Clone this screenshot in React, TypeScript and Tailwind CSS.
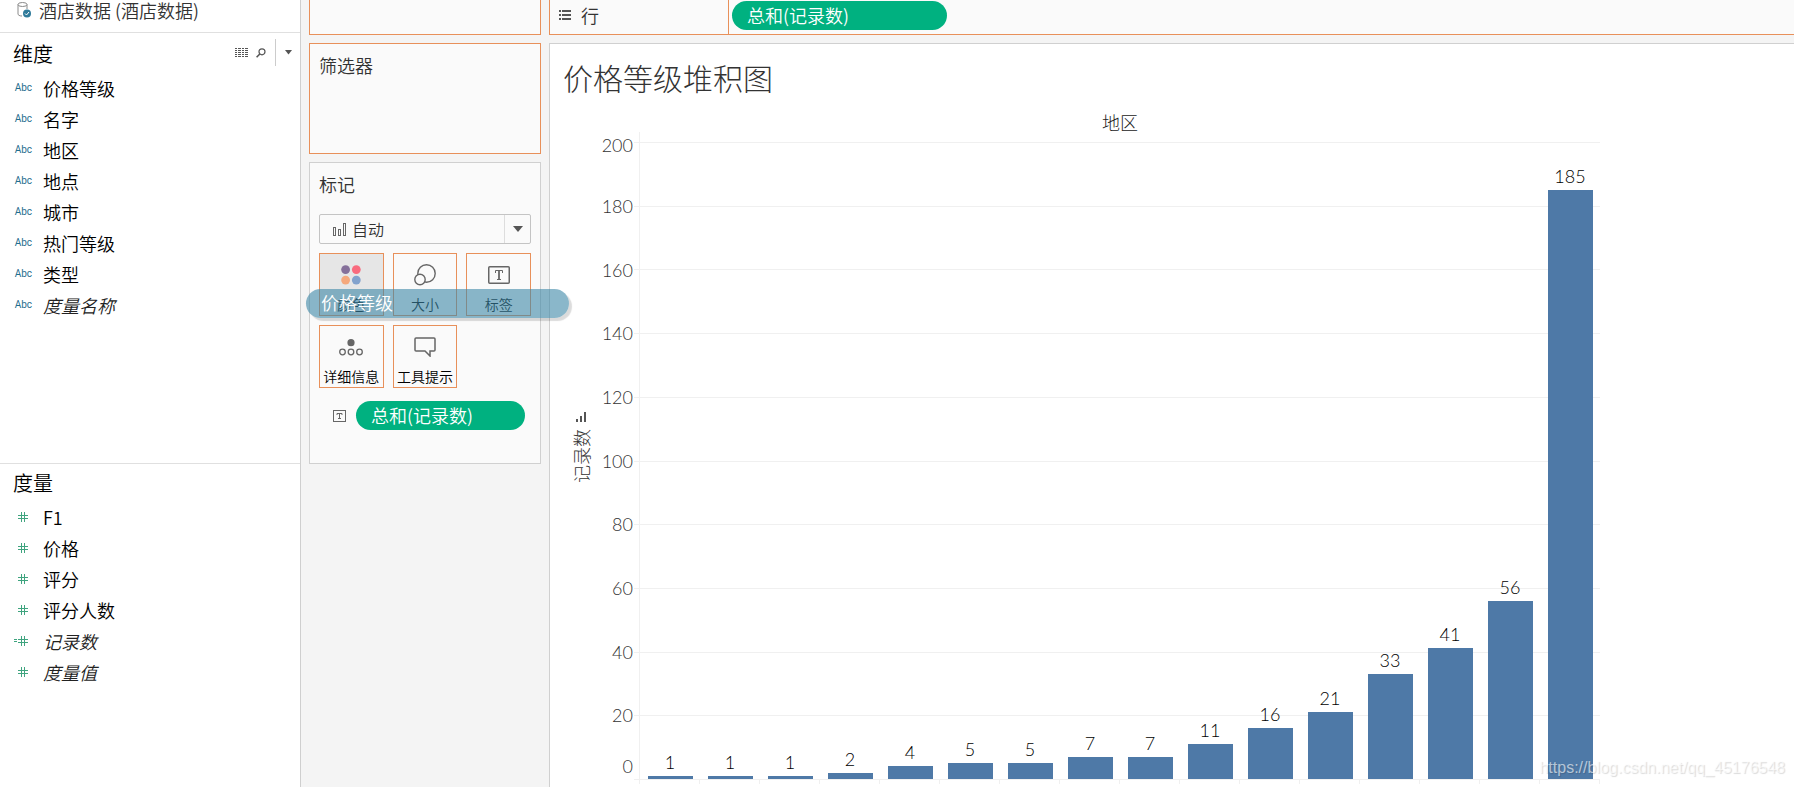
import React from "react";

const dimensions = ["价格等级", "名字", "地区", "地点", "城市", "热门等级", "类型"];
const measures = ["F1", "价格", "评分", "评分人数"];
const values = [1, 1, 1, 2, 4, 5, 5, 7, 7, 11, 16, 21, 33, 41, 56, 185];
const axisTicks = [180, 160, 140, 120, 100, 80, 60, 40, 20];
const AXIS_MAX = 200;

function DatabaseIcon() {
  return (
    <svg width="15" height="16" viewBox="0 0 15 16" fill="none" aria-hidden="true">
      <path d="M1 2.5v9.5c0 1 1.5 2 4 2M10 2.5V7" stroke="#8a8a8a" />
      <ellipse cx="5.5" cy="2.5" rx="4.5" ry="2" stroke="#8a8a8a" />
      <circle cx="10" cy="11.5" r="4" fill="#2f7a9a" />
      <path d="M8 11.5l1.5 1.5 2.5-3" stroke="#fff" />
    </svg>
  );
}

function GridIcon() {
  return (
    <svg width="13" height="10" viewBox="0 0 13 10" fill="#555" shapeRendering="crispEdges" aria-hidden="true">
      {[0, 2, 4, 6, 8].map((y) => (
        <g key={y}>
          <rect x="0" y={y} width="2" height="1" />
          <rect x="3" y={y} width="3" height="1" />
          <rect x="7" y={y} width="2" height="1" />
          <rect x="10" y={y} width="3" height="1" />
        </g>
      ))}
    </svg>
  );
}

function SearchIcon() {
  return (
    <svg width="10" height="10" viewBox="0 0 10 10" fill="none" stroke="#555" strokeWidth="1.2" aria-hidden="true">
      <circle cx="6" cy="3.8" r="3" />
      <path d="M3.8 6L.6 9.2" strokeWidth="1.6" />
    </svg>
  );
}

function HashIcon({ calculated = false }: { calculated?: boolean }) {
  return (
    <svg width="15" height="10" viewBox="0 0 15 10" fill="#3fa47f" shapeRendering="crispEdges" aria-hidden="true">
      <rect x="8" y="0" width="1" height="10" />
      <rect x="11" y="0" width="1" height="10" />
      <rect x="5" y="3" width="10" height="1" />
      <rect x="5" y="6" width="10" height="1" />
      {calculated && (
        <>
          <rect x="1" y="3" width="3" height="1" />
          <rect x="1" y="5" width="3" height="1" />
        </>
      )}
    </svg>
  );
}

function TextIcon({ small = false }: { small?: boolean }) {
  return small ? (
    <svg width="13" height="12" viewBox="0 0 13 12" fill="none" stroke="#666" aria-hidden="true">
      <rect x=".5" y=".5" width="12" height="11" />
      <path d="M4 5V3.5h5V5M6.5 3.5v5M5 8.5h3" />
    </svg>
  ) : (
    <svg width="22" height="18" viewBox="0 0 22 18" fill="none" stroke="#666" aria-hidden="true">
      <rect x=".75" y=".75" width="20.5" height="16.5" rx="1" strokeWidth="1.5" />
      <path d="M7.5 7V4.5h7V7M9 13.5h4" />
      <path d="M11 4.5v9" strokeWidth="1.8" />
    </svg>
  );
}

function ColorIcon() {
  return (
    <svg width="20" height="20" viewBox="0 0 20 20" aria-hidden="true">
      <circle cx="4.6" cy="4.6" r="4.4" fill="#85709a" />
      <circle cx="15.3" cy="4.6" r="4.4" fill="#f96b7e" />
      <circle cx="4.6" cy="15.1" r="4.4" fill="#f5a87c" />
      <circle cx="15.3" cy="15.1" r="4.4" fill="#82a2cd" />
    </svg>
  );
}

function SizeIcon() {
  return (
    <svg width="22" height="22" viewBox="0 0 22 22" fill="none" stroke="#666" strokeWidth="1.4" aria-hidden="true">
      <circle cx="12.5" cy="9.5" r="8.7" />
      <circle cx="6" cy="15.5" r="5.2" fill="#fafafa" />
    </svg>
  );
}

function DetailIcon() {
  return (
    <svg width="24" height="17" viewBox="0 0 24 17" fill="none" stroke="#666" strokeWidth="1.3" aria-hidden="true">
      <circle cx="12" cy="3.7" r="3.6" fill="#666" stroke="none" />
      <circle cx="3.5" cy="13" r="2.8" />
      <circle cx="12" cy="13" r="2.8" />
      <circle cx="20.5" cy="13" r="2.8" />
    </svg>
  );
}

function TooltipIcon() {
  return (
    <svg width="22" height="20" viewBox="0 0 22 20" fill="none" stroke="#666" strokeWidth="1.5" aria-hidden="true">
      <path d="M2 1h18q1 0 1 1v11q0 1-1 1h-4v5l-5-5H2q-1 0-1-1V2q0-1 1-1z" />
    </svg>
  );
}

function Field({ name, icon, italic = false }: { name: string; icon: React.ReactNode; italic?: boolean }) {
  return (
    <li className="flex h-[31px] items-center">
      <span className="flex w-[43px] shrink-0 justify-end pr-[15px] pt-px">{icon}</span>
      <span className={italic ? "italic text-[#222]" : ""}>{name}</span>
    </li>
  );
}

function AbcIcon() {
  return <span className="-mr-1 font-['Roboto',sans-serif] text-[10px] font-normal leading-3 text-[#1f6d8e]">Abc</span>;
}

function MarkButton({ label, icon, active = false }: { label: string; icon: React.ReactNode; active?: boolean }) {
  return (
    <button
      type="button"
      className={`flex h-[63px] flex-col items-center justify-between border border-[#e8905a] pb-[1px] pt-[9px] text-sm leading-5 whitespace-nowrap ${active ? "bg-[#e6e6e6]" : "bg-[#fafafa]"}`}
    >
      <span className="flex h-6 items-center">{icon}</span>
      <span>{label}</span>
    </button>
  );
}

function Sidebar() {
  return (
    <aside className="flex w-[301px] shrink-0 flex-col border-r border-[#cfcfcf] bg-white text-lg leading-6">
      <div className="flex h-[33px] items-center gap-[7px] border-b border-[#e0e0e0] pb-3 pl-[17px] text-[#333]">
        <DatabaseIcon />
        <span>酒店数据 (酒店数据)</span>
      </div>
      <section className="h-[430px]">
        <div className="flex h-[39px] items-center pl-[13px]">
          <h2 className="flex-1 pt-0.5 text-xl">维度</h2>
          <div className="flex h-[27px] items-center">
            <button type="button" aria-label="查看数据"><GridIcon /></button>
            <button type="button" aria-label="查找字段" className="ml-2 mr-[9px]"><SearchIcon /></button>
            <button type="button" aria-label="菜单" className="h-full border-l border-[#ccc] pl-[9px] pr-2">
              <svg width="7" height="5" viewBox="0 0 7 5" fill="#555" aria-hidden="true"><path d="M0 0h7L3.500 4.500z" /></svg>
            </button>
          </div>
        </div>
        <ul>
          {dimensions.map((d) => <Field key={d} name={d} icon={<AbcIcon />} />)}
          <Field name="度量名称" icon={<AbcIcon />} italic />
        </ul>
      </section>
      <section className="border-t border-[#e0e0e0]">
        <h2 className="flex h-[37px] items-center pl-[13px] text-xl">度量</h2>
        <ul>
          {measures.map((m) => <Field key={m} name={m} icon={<HashIcon />} />)}
          <Field name="记录数" icon={<HashIcon calculated />} italic />
          <Field name="度量值" icon={<HashIcon />} italic />
        </ul>
      </section>
    </aside>
  );
}

function Cards() {
  return (
    <div className="flex w-[232px] shrink-0 flex-col gap-2 text-[#333]">
      <div className="h-[35px] border border-t-0 border-[#e8905a] bg-[#fafafa]" />
      <section className="h-[111px] border border-[#e8905a] bg-[#fafafa] px-[9px] py-[9px]">
        <h2 className="text-lg leading-6">筛选器</h2>
      </section>
      <section className="relative h-[302px] border border-[#d0d0d0] bg-[#fafafa] px-[9px] py-[9px]">
        <h2 className="text-lg leading-6">标记</h2>
        <div className="mt-[18px] grid items-center">
          <select aria-label="标记类型" className="col-start-1 row-start-1 h-[30px] w-full appearance-none rounded-xs border border-[#c4c4c4] bg-[#fafafa] pl-8 text-base">
            <option>自动</option>
          </select>
          <div className="pointer-events-none col-start-1 row-start-1 flex items-center justify-between pl-[14px]">
            <svg width="13" height="13" viewBox="0 0 13 13" fill="none" stroke="#666" aria-hidden="true">
              <rect x=".5" y="4.500" width="2" height="8" />
              <rect x="5.500" y="6.500" width="2" height="6" />
              <rect x="10.500" y=".5" width="2" height="12" />
            </svg>
            <span className="flex h-7 w-[27px] items-center justify-center border-l border-[#ddd]">
              <svg width="10" height="6" viewBox="0 0 10 6" fill="#555" aria-hidden="true"><path d="M0 0h10L5 6z" /></svg>
            </span>
          </div>
        </div>
        <div className="mt-[9px] grid grid-cols-3 gap-x-[9px] gap-y-[9px] text-black">
          <MarkButton label="颜色" icon={<ColorIcon />} active />
          <MarkButton label="大小" icon={<SizeIcon />} />
          <MarkButton label="标签" icon={<TextIcon />} />
          <MarkButton label="详细信息" icon={<DetailIcon />} />
          <MarkButton label="工具提示" icon={<TooltipIcon />} />
        </div>
        <div className="mt-[13px] flex items-center gap-[10px] pl-[14px] pr-[6px]">
          <TextIcon small />
          <button type="button" className="h-[29px] flex-1 rounded-full bg-[#00b180] pb-px pl-[15px] text-left text-lg leading-6 text-white">总和(记录数)</button>
        </div>
        <div className="absolute left-[-4px] top-[126px] z-10 h-[29px] w-[263px] rounded-full bg-[#3c87a6]/60 pl-[15px] text-lg leading-[26px] text-white shadow-[3px_3px_1px_rgba(0,0,0,0.14)]">
          价格等级
        </div>
      </section>
    </div>
  );
}

function Chart() {
  return (
    <div className="flex pl-[21px]">
      <div className="mt-[22px] flex h-[647px] w-[20px] shrink-0 flex-col items-center">
        <div className="flex flex-1 flex-col justify-end pb-[7px]">
          <svg width="10" height="10" viewBox="0 0 10 10" fill="#555" shapeRendering="crispEdges" aria-hidden="true">
            <rect x="0" y="7" width="2" height="3" />
            <rect x="4" y="4" width="2" height="6" />
            <rect x="8" y="0" width="2" height="10" />
          </svg>
        </div>
        <span className="rotate-180 text-lg font-light leading-5 text-[#333] [text-orientation:sideways] [writing-mode:vertical-rl]">记录数</span>
        <div className="flex-1" />
      </div>
      <div className="mt-[25px] flex h-[647px] w-[42px] shrink-0 flex-col text-right font-['Lato',sans-serif] text-lg font-light text-[#333]">
        <span className="mb-[14px] h-7 leading-[26px]">200</span>
        {axisTicks.map((t) => <span key={t} className="flex flex-1 items-center justify-end">{t}</span>)}
        <span className="h-8 pt-2 leading-[22px]">0</span>
      </div>
      <div className="ml-px max-w-[966px] flex-1">
        <div className="h-[25px] pl-[6px] text-center text-lg font-light leading-[30px] text-[#222]">地区</div>
        <div className="grid h-[648px]">
          <div className="col-start-1 row-start-1 flex flex-col border-b border-[#f0f0f0] pt-[10px]">
            {[200, ...axisTicks].map((t) => <div key={t} className="flex-1 border-t border-[#f0f0f0]" />)}
          </div>
          <div className="col-start-1 row-start-1 ml-[5px] flex items-end border-l border-[#f0f0f0] pb-px pt-[10px]">
            {values.map((v, i) => (
              <div key={i} className="flex h-full flex-1 flex-col items-center justify-end">
                <span className="font-['Lato',sans-serif] text-lg font-light leading-[28px] text-black">{v}</span>
                <div className="w-3/4 shrink-0 bg-[#4e79a7]" style={{ height: `${(v / AXIS_MAX) * 100}%` }} />
              </div>
            ))}
          </div>
        </div>
        <div className="ml-[5px] flex h-1 border-x border-[#f0f0f0]">
          {values.map((_, i) => <div key={i} className={i ? "flex-1 border-l border-[#f0f0f0]" : "flex-1"} />)}
        </div>
      </div>
    </div>
  );
}

export default function App() {
  return (
    <div className="relative flex min-h-screen bg-[#f4f4f4] font-['Noto_Sans_CJK_SC',sans-serif] font-[350] text-black">
      <Sidebar />
      <main className="flex min-w-0 flex-1 gap-2 pl-2">
        <Cards />
        <div className="flex min-w-0 flex-1 flex-col gap-2">
          <div className="flex h-[35px] border-b border-l border-[#e8905a] bg-[#fafafa] text-lg leading-6">
            <div className="flex w-[179px] items-center gap-[10px] border-r border-[#e8905a] pb-1 pl-[9px] text-[#333]">
              <svg width="12" height="10" viewBox="0 0 12 10" fill="#555" shapeRendering="crispEdges" aria-hidden="true">
                {[0, 4, 8].map((y) => (
                  <g key={y}>
                    <rect x="0" y={y} width="2" height="2" />
                    <rect x="3" y={y} width="9" height="2" />
                  </g>
                ))}
              </svg>
              <span>行</span>
            </div>
            <div className="pl-[3px] pt-px">
              <button type="button" className="h-[29px] w-[215px] rounded-full bg-[#00b180] pb-px pl-[15px] text-left text-white">总和(记录数)</button>
            </div>
          </div>
          <section className="flex-1 border-l border-t border-[#d0d0d0] bg-white">
            <h1 className="h-[63px] pl-[13px] pt-[13px] text-3xl font-light leading-[40px] text-[#333]">价格等级堆积图</h1>
            <Chart />
          </section>
        </div>
      </main>
      <div className="absolute bottom-[9px] right-[9px] font-['Liberation_Sans',sans-serif] text-base font-normal leading-5 text-white/60 [text-shadow:1px_1px_1px_rgba(0,0,0,0.15)]">
        https://blog.csdn.net/qq_45176548
      </div>
    </div>
  );
}
